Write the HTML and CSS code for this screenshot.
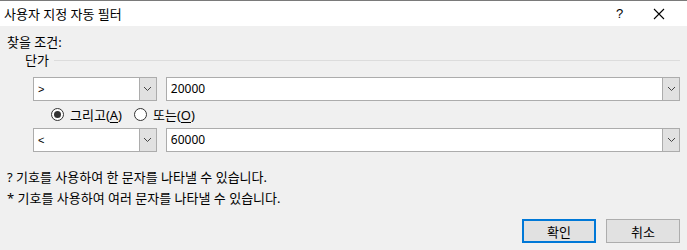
FILE: index.html
```html
<html>
<head>
<meta charset="utf-8">
<link rel="stylesheet" href="styles.css">
</head>
<body>
<div class="titlebar">
	<span class="title">사용자 지정 자동 필터</span>
	<span class="help">?</span>
	<span class="close">
		<svg width="12" height="12" viewBox="0 0 12 12"><path d="M1 1 L11 11 M11 1 L1 11" stroke="#000" stroke-width="1.1"/></svg>
	</span>
</div>
<div class="content">
	<div class="label">찾을 조건:</div>
	<div class="group">
		<span>단가</span>
		<div class="rule"></div>
	</div>
	<div class="row">
		<div class="combo small">
			<div class="value op">&gt;</div>
			<div class="arrow"><svg width="9" height="6" viewBox="0 0 9 6"><path d="M1 1 L4.5 4.5 L8 1" fill="none" stroke="#444" stroke-width="1"/></svg></div>
		</div>
		<div class="combo wide">
			<div class="value">20000</div>
			<div class="arrow"><svg width="9" height="6" viewBox="0 0 9 6"><path d="M1 1 L4.5 4.5 L8 1" fill="none" stroke="#444" stroke-width="1"/></svg></div>
		</div>
	</div>
	<div class="radios">
		<label class="radio"><span class="dot checked"></span><span>그리고(<u>A</u>)</span></label>
		<label class="radio"><span class="dot"></span><span>또는(<u>O</u>)</span></label>
	</div>
	<div class="row">
		<div class="combo small">
			<div class="value op">&lt;</div>
			<div class="arrow"><svg width="9" height="6" viewBox="0 0 9 6"><path d="M1 1 L4.5 4.5 L8 1" fill="none" stroke="#444" stroke-width="1"/></svg></div>
		</div>
		<div class="combo wide">
			<div class="value">60000</div>
			<div class="arrow"><svg width="9" height="6" viewBox="0 0 9 6"><path d="M1 1 L4.5 4.5 L8 1" fill="none" stroke="#444" stroke-width="1"/></svg></div>
		</div>
	</div>
	<div class="hints">
		<div>? 기호를 사용하여 한 문자를 나타낼 수 있습니다.</div>
		<div>* 기호를 사용하여 여러 문자를 나타낼 수 있습니다.</div>
	</div>
	<div class="buttons">
		<button class="btn default">확인</button>
		<button class="btn">취소</button>
	</div>
</div>
</body>
</html>
```

FILE: styles.css
```css
body {
	margin: 0;
	background: #f0f0f0;
	font-family: "Noto Sans", "Noto Sans CJK KR", sans-serif;
	font-size: 13px;
	color: #000;
	width: 687px;
	height: 250px;
	overflow: hidden;
}
.titlebar {
	height: 25px;
	background: #fff;
	border-top: 1px solid #7a7a7a;
	display: flex;
	align-items: center;
	padding-left: 4px;
}
.title {
	flex: 1;
}
.help {
	width: 12px;
	margin-right: 25px;
	font-family: "Liberation Sans", sans-serif;
	font-size: 13px;
}
.close {
	width: 12px;
	margin-right: 22px;
	display: flex;
}
.content {
	padding: 8px 7px 0 7px;
}
.label {
	line-height: 16px;
}
.group {
	display: flex;
	align-items: center;
	padding-left: 18px;
	margin-top: 2px;
	line-height: 16px;
}
.rule {
	flex: 1;
	border-top: 1px solid #dcdcdc;
	margin-left: 5px;
	margin-top: 1px;
}
.row {
	display: flex;
	gap: 9px;
	margin-left: 26px;
	height: 24px;
}
.group + .row {
	margin-top: 9px;
}
.combo {
	display: flex;
	background: #fff;
	border: 1px solid #acacac;
	box-sizing: border-box;
	height: 24px;
}
.small {
	width: 124px;
}
.wide {
	width: 515px;
}
.value {
	flex: 1;
	padding-left: 4px;
	line-height: 22px;
	font-size: 12px;
}
.op {
	font-family: "Liberation Sans", sans-serif;
	font-size: 11px;
}
.arrow {
	width: 16px;
	background: #e1e1e1;
	border-left: 1px solid #acacac;
	display: flex;
	align-items: center;
	justify-content: center;
}
.radios {
	height: 27px;
	display: flex;
	align-items: center;
	padding-left: 44px;
	gap: 12px;
}
.radio {
	display: flex;
	align-items: center;
	gap: 6px;
}
.radio u {
	text-underline-offset: 2px;
}
.dot {
	width: 11px;
	height: 11px;
	border: 1px solid #333;
	border-radius: 50%;
	background: #fff;
	display: flex;
	align-items: center;
	justify-content: center;
}
.dot.checked::after {
	content: "";
	width: 7px;
	height: 7px;
	border-radius: 50%;
	background: #333;
}
.hints {
	margin-top: 15px;
	line-height: 21px;
}
.buttons {
	display: flex;
	justify-content: flex-end;
	gap: 10px;
	margin-top: 10px;
}
.btn {
	width: 74px;
	height: 24px;
	background: #e1e1e1;
	border: 1px solid #adadad;
	font-family: "Noto Sans", "Noto Sans CJK KR", sans-serif;
	font-size: 13px;
	padding: 0;
	color: #000;
}
.btn.default {
	border: 2px solid #0078d7;
}
```
